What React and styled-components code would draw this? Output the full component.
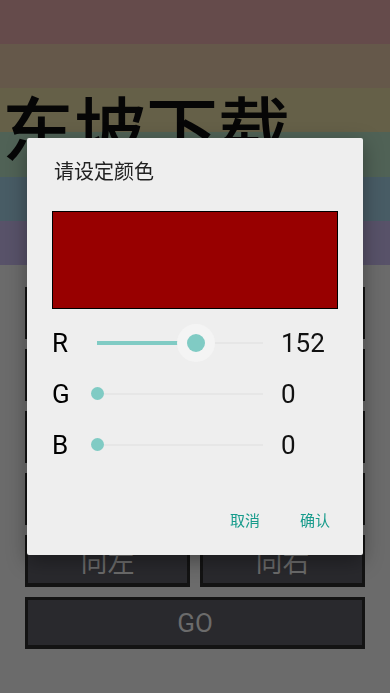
import React from "react";
import styled, { createGlobalStyle } from "styled-components";

const Global = createGlobalStyle`
  html, body { margin: 0; padding: 0; }
  body {
    background: #6b6b6b;
    font-family: Roboto, "Noto Sans CJK SC", sans-serif;
  }
  * { box-sizing: border-box; }
`;

const S = 265 / 6;
const stripes = ["#654b4b", "#65584a", "#656048", "#506256", "#485c65", "#585269"];
const stripeGradient = `linear-gradient(to bottom, ${stripes
  .map((c, i) => `${c} ${(i * S).toFixed(2)}px, ${c} ${((i + 1) * S).toFixed(2)}px`)
  .join(", ")})`;

const Page = styled.div`
  min-height: 693px;
  background: #6b6b6b;
`;

const Header = styled.header`
  height: 265px;
  background: ${stripeGradient};
  padding: 90px 0 0 2px;
  overflow: hidden;
`;

const BigTitle = styled.h1`
  margin: 0;
  font-family: "Noto Sans CJK SC", sans-serif;
  font-weight: 500;
  font-size: 72px;
  line-height: 72px;
  color: #060606;
  white-space: nowrap;
`;

const ButtonList = styled.div`
  display: flex;
  flex-direction: column;
  gap: 10px;
  padding: 22px 25px;
`;

const ButtonRow = styled.div`
  display: grid;
  grid-template-columns: ${(p) => (p.$split ? "1fr 1fr" : "1fr")};
  gap: 10px;
`;

const PageButton = styled.button`
  height: 52px;
  margin: 0;
  padding: 0;
  border: 3px solid #131313;
  border-bottom-width: 4px;
  background: #29292d;
  color: #6b6b6b;
  font-family: Roboto, "Noto Sans CJK SC", sans-serif;
  font-size: ${(p) => (p.$latin ? "26px" : "27px")};
  display: flex;
  align-items: center;
  justify-content: center;
`;

const Scrim = styled.div`
  position: fixed;
  inset: 0;
  display: flex;
  align-items: center;
  justify-content: center;
`;

const Dialog = styled.div`
  width: 336px;
  height: 417px;
  background: #eeeeee;
  border-radius: 2px;
  box-shadow: 0 6px 20px rgba(0, 0, 0, 0.35);
  padding: 21px 25px 0;
  display: flex;
  flex-direction: column;
`;

const DialogTitle = styled.h2`
  margin: 0 0 0 2px;
  font-family: "Noto Sans CJK SC", sans-serif;
  font-weight: 400;
  font-size: 20px;
  line-height: 24px;
  color: #212121;
`;

const Preview = styled.div`
  margin-top: 28px;
  height: 98px;
  border: 1px solid #000;
`;

const Sliders = styled.div`
  margin-top: 8px;
  display: flex;
  flex-direction: column;
`;

const ChannelRow = styled.div`
  height: 51px;
  display: grid;
  grid-template-columns: 37px 182px 1fr;
  align-items: center;
`;

const ChannelLabel = styled.span`
  font-family: Roboto, sans-serif;
  font-size: 26px;
  color: #000;
`;

const ChannelValue = styled.span`
  font-family: Roboto, sans-serif;
  font-size: 26px;
  color: #111;
  padding-left: 10px;
`;

const SliderBox = styled.div`
  position: relative;
  height: 40px;
`;

const Track = styled.div`
  position: absolute;
  left: 8px;
  right: 8px;
  top: 50%;
  height: 2px;
  margin-top: -1px;
  background: #e6e6e6;
`;

const Fill = styled.div`
  position: absolute;
  left: 8px;
  top: 50%;
  height: 4px;
  margin-top: -2px;
  background: #80cbc4;
`;

const Halo = styled.div`
  position: absolute;
  top: 50%;
  width: 38px;
  height: 38px;
  margin: -19px 0 0 -19px;
  border-radius: 50%;
  background: #f4f4f4;
`;

const Thumb = styled.div`
  position: absolute;
  top: 50%;
  width: ${(p) => (p.$active ? 18 : 13)}px;
  height: ${(p) => (p.$active ? 18 : 13)}px;
  margin-top: ${(p) => (p.$active ? -9 : -6.5)}px;
  margin-left: ${(p) => (p.$active ? -9 : -6.5)}px;
  border-radius: 50%;
  background: #80cbc4;
`;

const Actions = styled.div`
  margin-top: 31px;
  height: 36px;
  display: flex;
  justify-content: flex-end;
  align-items: center;
  gap: 40px;
  padding-right: 8px;
`;

const ActionButton = styled.button`
  border: 0;
  margin: 0;
  padding: 0;
  background: none;
  font-family: "Noto Sans CJK SC", sans-serif;
  font-size: 15px;
  color: #169b8b;
`;

function ColorSlider({ value, active }) {
  const width = 166;
  const pos = 8 + (value / 255) * width;
  return (
    <SliderBox>
      <Track />
      <Fill style={{ width: `${pos - 8}px` }} />
      {active && <Halo style={{ left: `${pos}px` }} />}
      <Thumb $active={active} style={{ left: `${pos}px` }} />
    </SliderBox>
  );
}

export default function App() {
  const channels = [
    { name: "R", value: 152, active: true },
    { name: "G", value: 0 },
    { name: "B", value: 0 },
  ];
  const [r, g, b] = channels.map((c) => c.value);
  return (
    <>
      <Global />
      <Page>
        <Header>
          <BigTitle>东坡下载</BigTitle>
        </Header>
        <ButtonList>
          <ButtonRow><PageButton>设置颜色</PageButton></ButtonRow>
          <ButtonRow><PageButton>向上</PageButton></ButtonRow>
          <ButtonRow><PageButton>向下</PageButton></ButtonRow>
          <ButtonRow><PageButton>重置</PageButton></ButtonRow>
          <ButtonRow $split>
            <PageButton>向左</PageButton>
            <PageButton>向右</PageButton>
          </ButtonRow>
          <ButtonRow><PageButton $latin>GO</PageButton></ButtonRow>
        </ButtonList>
      </Page>
      <Scrim>
        <Dialog>
          <DialogTitle>请设定颜色</DialogTitle>
          <Preview style={{ background: `rgb(${r}, ${g}, ${b})` }} />
          <Sliders>
            {channels.map((c) => (
              <ChannelRow key={c.name}>
                <ChannelLabel>{c.name}</ChannelLabel>
                <ColorSlider value={c.value} active={c.active} />
                <ChannelValue>{c.value}</ChannelValue>
              </ChannelRow>
            ))}
          </Sliders>
          <Actions>
            <ActionButton>取消</ActionButton>
            <ActionButton>确认</ActionButton>
          </Actions>
        </Dialog>
      </Scrim>
    </>
  );
}
